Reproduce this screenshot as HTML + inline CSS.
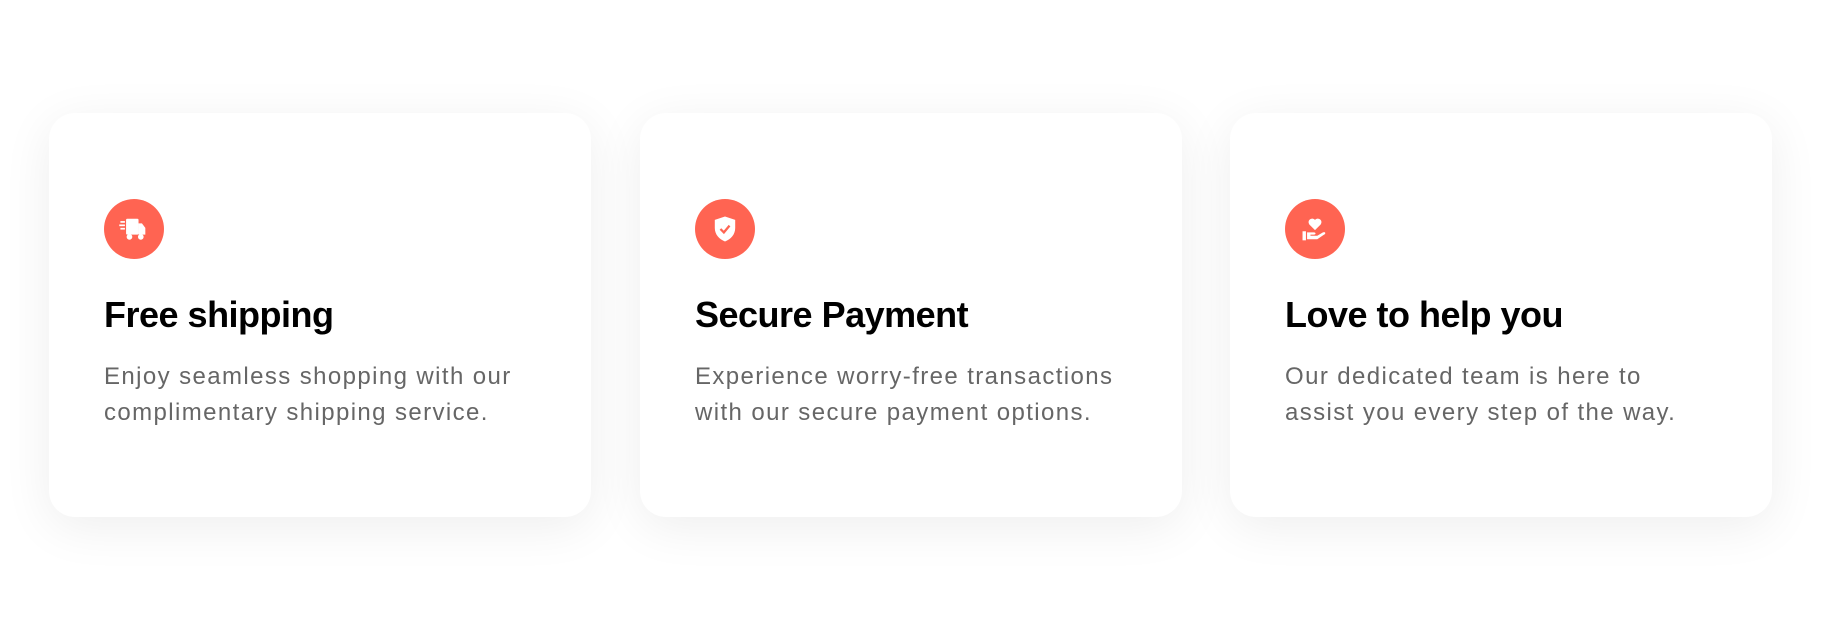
<!DOCTYPE html>
<html><head><style>
html,body{margin:0;padding:0;background:#fff;width:1821px;height:620px;overflow:hidden}
.card{position:absolute;top:113px;width:542px;height:404px;background:#fff;border-radius:26px;box-shadow:0 10px 50px rgba(0,0,0,0.07)}
.ic{position:absolute;left:55px;top:86px;width:60px;height:60px;border-radius:50%;background:#ff6452}
.ic svg{position:absolute;left:13px;top:13px}
h3{position:absolute;left:55px;top:181px;margin:0;font:bold 36px "Liberation Sans",sans-serif;color:#000;letter-spacing:-0.5px}
p{position:absolute;left:55px;top:246px;margin:0;width:425px;font:24px/36px "Liberation Sans",sans-serif;color:#666;letter-spacing:1.4px}
</style></head><body>
<div class="card" style="left:49px">
<div class="ic"><svg width="34" height="34" viewBox="0 0 30 30" fill="#fff"><rect x="8" y="6" width="11" height="14" rx="1"/><path d="M19 10h3l3 4v6h-6z"/><rect x="3" y="8" width="4" height="1.5"/><rect x="2" y="11" width="5" height="1.5"/><rect x="3" y="14" width="4" height="1.5"/><circle cx="11" cy="22" r="2.5"/><circle cx="21" cy="22" r="2.5"/></svg></div>
<h3>Free shipping</h3>
<p>Enjoy seamless shopping with our complimentary shipping service.</p>
</div>
<div class="card" style="left:640px">
<div class="ic"><svg width="34" height="34" viewBox="0 0 30 30"><path d="M15 4l9 3v7c0 6-4 10-9 12c-5-2-9-6-9-12V7z" fill="#fff"/><path d="M11 15l3 3l5-6" stroke="#ff6452" stroke-width="2" fill="none"/></svg></div>
<h3>Secure Payment</h3>
<p>Experience worry-free transactions with our secure payment options.</p>
</div>
<div class="card" style="left:1230px">
<div class="ic"><svg width="34" height="34" viewBox="0 0 30 30" fill="#fff"><path d="M15 16l-5-5a3 3 0 0 1 5-4a3 3 0 0 1 5 4z"/><rect x="4" y="17" width="3" height="8"/><path d="M8 18h6c2 0 2 2 0 2h-3v1h6l5-3c2-1 3 1 1 2l-6 4H8z"/></svg></div>
<h3>Love to help you</h3>
<p>Our dedicated team is here to assist you every step of the way.</p>
</div>
</body></html>
